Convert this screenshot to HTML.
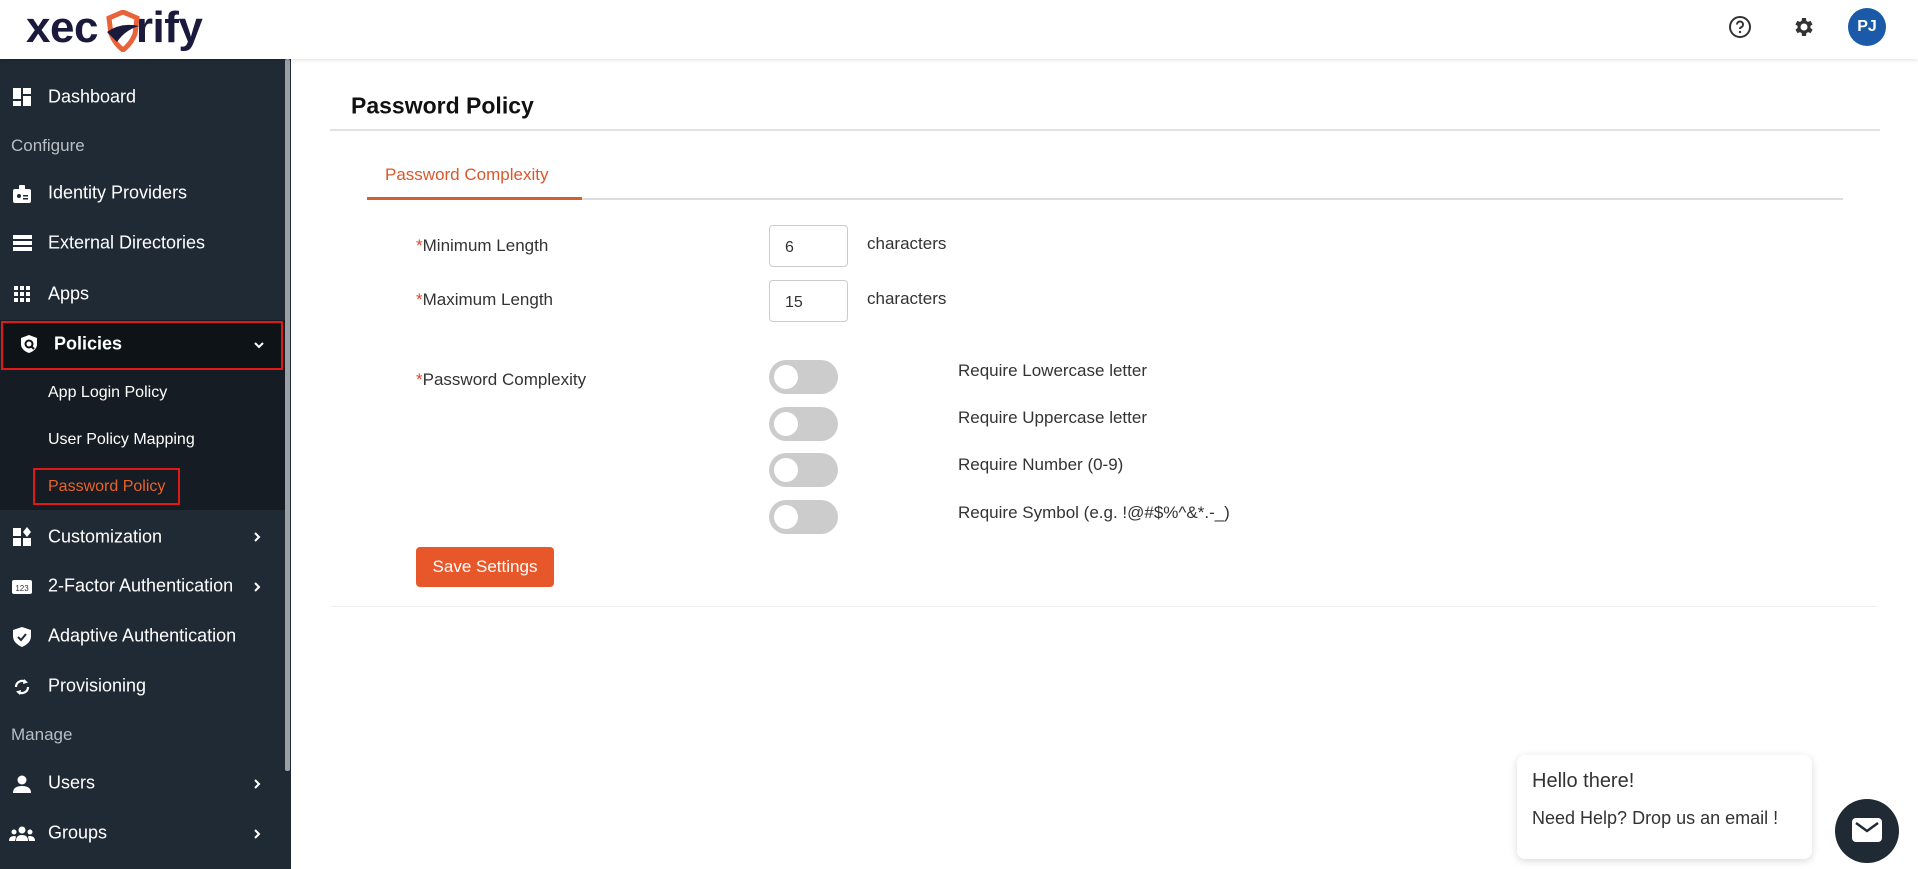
<!DOCTYPE html>
<html><head><meta charset="utf-8"><style>
*{box-sizing:border-box;margin:0;padding:0}
body{width:1918px;height:869px;overflow:hidden;background:#fff;font-family:"Liberation Sans",sans-serif;position:relative}
.hdr{position:absolute;left:0;top:0;width:1918px;height:59px;background:#fff;box-shadow:0 1px 4px rgba(0,0,0,.12);z-index:2}
.logo{position:absolute;left:26px;top:3px;font-size:44px;font-weight:bold;color:#1b1a3d;letter-spacing:-0.5px;white-space:nowrap}
.side{position:absolute;left:0;top:59px;width:291px;height:810px;background:#1f2a35;color:#fff}
.sb{position:absolute;left:285px;top:59px;width:5px;height:712px;background:#9aa0a6;border-radius:2px}
.it{position:absolute;left:48px;font-size:18px;transform:translateY(-50%);white-space:nowrap}
.ic{position:absolute;left:12px;width:20px;height:20px;transform:translateY(-50%)}
.sec{position:absolute;left:11px;font-size:17px;color:#b8bec4;transform:translateY(-50%)}
.chev{position:absolute;left:252px;transform:translateY(-50%);width:10px;height:10px}
.lbl{position:absolute;font-size:17px;color:#333;transform:translateY(-50%);white-space:nowrap}
.lbl b{color:#e0452a;font-weight:normal}
.inp{position:absolute;left:769px;width:79px;height:42px;border:1px solid #ccc;border-radius:4px;font-size:16px;color:#333;padding:13px 0 0 15px}
.tg{position:absolute;left:769px;width:69px;height:34px;border-radius:17px;background:#ccc;transform:translateY(-50%)}
.tg::after{content:"";position:absolute;left:5px;top:5px;width:24px;height:24px;border-radius:50%;background:#fff}
</style></head><body>
<div class="hdr">
 <div class="logo">xec<span style="display:inline-block;width:38px"></span>rify</div>
 <svg style="position:absolute;left:104px;top:10px" width="38" height="42" viewBox="0 0 36 42"><path d="M4 8 L18 2 L32 8 L30 24 Q26 34 18 40 Q10 34 6 24 Z" fill="none" stroke="#e8623a" stroke-width="5"/><path d="M2 22 Q16 12 34 16 Q20 20 12 32 Z" fill="#1b1a3d"/></svg>
 <svg style="position:absolute;left:1728px;top:15px" width="24" height="24" viewBox="0 0 24 24"><circle cx="12" cy="12" r="10" fill="none" stroke="#333" stroke-width="2"/><path d="M9 9.5a3 3 0 1 1 4 2.8c-.8.4-1 1-1 1.7" fill="none" stroke="#333" stroke-width="2"/><circle cx="12" cy="17" r="1.2" fill="#333"/></svg>
 <svg style="position:absolute;left:1791px;top:15px" width="24" height="24" viewBox="0 0 24 24"><path fill="#333" d="M19.4 13a7.5 7.5 0 0 0 0-2l2.1-1.6-2-3.5-2.5 1a7 7 0 0 0-1.7-1L15 3h-4l-.4 2.9a7 7 0 0 0-1.7 1l-2.5-1-2 3.5L6.6 11a7.5 7.5 0 0 0 0 2l-2.1 1.6 2 3.5 2.5-1a7 7 0 0 0 1.7 1L11 21h4l.4-2.9a7 7 0 0 0 1.7-1l2.5 1 2-3.5zM13 15.5A3.5 3.5 0 1 1 13 8.5a3.5 3.5 0 0 1 0 7z"/></svg>
 <div style="position:absolute;left:1848px;top:8px;width:38px;height:38px;border-radius:50%;background:#1a5aa8;color:#fff;font-weight:bold;font-size:16px;text-align:center;line-height:38px">PJ</div>
</div>
<div class="side">
 <div style="position:absolute;left:0;top:261px;width:285px;height:190px;background:#151c23"></div>
 <div style="position:absolute;left:1px;top:262px;width:282px;height:49px;border:2px solid #e01818;background:#0e1317"></div>
 <div style="position:absolute;left:33px;top:409px;width:147px;height:37px;border:2px solid #e01818"></div>
</div>
<div class="sb"></div>
<div style="position:absolute;left:0;top:0;color:#fff">
 <svg class="ic" style="top:97px" viewBox="0 0 20 20" fill="#fff"><rect x="1" y="1" width="8" height="11"/><rect x="11" y="1" width="8" height="6"/><rect x="11" y="9" width="8" height="10"/><rect x="1" y="14" width="8" height="5"/></svg>
 <div class="it" style="top:97px">Dashboard</div>
 <div class="sec" style="top:146px">Configure</div>
 <svg class="ic" style="top:194px" viewBox="0 0 20 20" fill="#fff"><rect x="1" y="5" width="18" height="14" rx="2"/><rect x="7" y="1" width="6" height="6" rx="1"/><circle cx="7" cy="12" r="2" fill="#1f2a35"/><rect x="11" y="11" width="5" height="1.5" fill="#1f2a35"/><rect x="11" y="14" width="5" height="1.5" fill="#1f2a35"/></svg>
 <div class="it" style="top:193px">Identity Providers</div>
 <svg class="ic" style="top:243px" viewBox="0 0 20 20" fill="#fff"><rect x="1" y="2" width="19" height="4"/><rect x="1" y="8" width="19" height="4"/><rect x="1" y="14" width="19" height="4"/></svg>
 <div class="it" style="top:243px">External Directories</div>
 <svg class="ic" style="top:294px" viewBox="0 0 20 20" fill="#fff"><rect x="2" y="2" width="4" height="4"/><rect x="8" y="2" width="4" height="4"/><rect x="14" y="2" width="4" height="4"/><rect x="2" y="8" width="4" height="4"/><rect x="8" y="8" width="4" height="4"/><rect x="14" y="8" width="4" height="4"/><rect x="2" y="14" width="4" height="4"/><rect x="8" y="14" width="4" height="4"/><rect x="14" y="14" width="4" height="4"/></svg>
 <div class="it" style="top:294px">Apps</div>
 <svg class="ic" style="top:344px;left:19px" viewBox="0 0 20 20"><path d="M10 1 L18 4 V10 Q18 16 10 19 Q2 16 2 10 V4 Z" fill="#fff"/><circle cx="10" cy="10" r="3.5" fill="none" stroke="#0e1317" stroke-width="2"/><path d="M12 12 L15 15" stroke="#0e1317" stroke-width="2"/></svg>
 <div class="it" style="top:344px;left:54px;font-weight:bold">Policies</div>
 <svg class="chev" style="top:345px;left:254px" viewBox="0 0 10 10"><path d="M1 3 L5 7 L9 3" fill="none" stroke="#fff" stroke-width="2"/></svg>
 <div class="it" style="top:393px;font-size:16px">App Login Policy</div>
 <div class="it" style="top:440px;font-size:16px">User Policy Mapping</div>
 <div class="it" style="top:487px;font-size:16px;color:#e8622c">Password Policy</div>
 <svg class="ic" style="top:537px" viewBox="0 0 20 20" fill="#fff"><rect x="1" y="1" width="8" height="8"/><rect x="1" y="11" width="8" height="8"/><rect x="11" y="11" width="8" height="8"/><path d="M15 0 L19 5 L15 10 L11 5Z"/></svg>
 <div class="it" style="top:537px">Customization</div>
 <svg class="chev" style="top:537px" viewBox="0 0 10 10"><path d="M3 1 L7 5 L3 9" fill="none" stroke="#fff" stroke-width="2"/></svg>
 <svg class="ic" style="top:587px" viewBox="0 0 20 20"><rect x="0" y="3" width="20" height="14" rx="2" fill="#fff"/><text x="10" y="14" font-size="8" text-anchor="middle" fill="#333" font-family="Liberation Sans">123</text></svg>
 <div class="it" style="top:586px">2-Factor Authentication</div>
 <svg class="chev" style="top:587px" viewBox="0 0 10 10"><path d="M3 1 L7 5 L3 9" fill="none" stroke="#fff" stroke-width="2"/></svg>
 <svg class="ic" style="top:637px" viewBox="0 0 20 20"><path d="M10 0 L19 3 V9 Q19 16 10 20 Q1 16 1 9 V3 Z" fill="#fff"/><path d="M6 10 L9 13 L14 7" fill="none" stroke="#1f2a35" stroke-width="2"/></svg>
 <div class="it" style="top:636px">Adaptive Authentication</div>
 <svg class="ic" style="top:687px" viewBox="0 0 20 20"><path d="M4 10a6 6 0 0 1 10-4.5M16 10a6 6 0 0 1-10 4.5" fill="none" stroke="#fff" stroke-width="2.2"/><path d="M12 2 L16 5.5 L11 7Z M8 18 L4 14.5 L9 13Z" fill="#fff"/></svg>
 <div class="it" style="top:686px">Provisioning</div>
 <div class="sec" style="top:735px">Manage</div>
 <svg class="ic" style="top:784px" viewBox="0 0 20 20" fill="#fff"><circle cx="10" cy="6" r="4.5"/><path d="M1 19 Q1 12 10 12 Q19 12 19 19Z"/></svg>
 <div class="it" style="top:783px">Users</div>
 <svg class="chev" style="top:784px" viewBox="0 0 10 10"><path d="M3 1 L7 5 L3 9" fill="none" stroke="#fff" stroke-width="2"/></svg>
 <svg class="ic" style="top:834px;width:26px;left:9px" viewBox="0 0 26 20" fill="#fff"><circle cx="13" cy="6" r="3.5"/><circle cx="5" cy="8" r="2.5"/><circle cx="21" cy="8" r="2.5"/><path d="M7 17 Q7 11 13 11 Q19 11 19 17Z M0 17 Q0 12 5 12 Q7 12 7 13 L6 17Z M26 17 Q26 12 21 12 Q19 12 19 13 L20 17Z"/></svg>
 <div class="it" style="top:833px">Groups</div>
 <svg class="chev" style="top:834px" viewBox="0 0 10 10"><path d="M3 1 L7 5 L3 9" fill="none" stroke="#fff" stroke-width="2"/></svg>
</div>

<div style="position:absolute;left:351px;top:106px;transform:translateY(-50%);font-size:23px;font-weight:bold;color:#111">Password Policy</div>
<div style="position:absolute;left:330px;top:129px;width:1550px;height:2px;background:#e2e2e2"></div>
<div style="position:absolute;left:385px;top:175px;transform:translateY(-50%);font-size:17px;color:#d9582c">Password Complexity</div>
<div style="position:absolute;left:367px;top:198px;width:1476px;height:2px;background:#ddd"></div>
<div style="position:absolute;left:367px;top:197px;width:215px;height:3px;background:#d0602e"></div>
<div class="lbl" style="left:416px;top:246px"><b>*</b>Minimum Length</div>
<div class="lbl" style="left:416px;top:300px"><b>*</b>Maximum Length</div>
<div class="lbl" style="left:416px;top:380px"><b>*</b>Password Complexity</div>
<div class="inp" style="top:225px">6</div>
<div class="inp" style="top:280px">15</div>
<div class="lbl" style="left:867px;top:244px">characters</div>
<div class="lbl" style="left:867px;top:299px">characters</div>
<div class="tg" style="top:377px"></div>
<div class="tg" style="top:424px"></div>
<div class="tg" style="top:470px"></div>
<div class="tg" style="top:517px"></div>
<div class="lbl" style="left:958px;top:371px">Require Lowercase letter</div>
<div class="lbl" style="left:958px;top:418px">Require Uppercase letter</div>
<div class="lbl" style="left:958px;top:465px">Require Number (0-9)</div>
<div class="lbl" style="left:958px;top:513px">Require Symbol (e.g. !@#$%^&amp;*.-_)</div>
<div style="position:absolute;left:416px;top:547px;width:138px;height:40px;background:#e8572a;border-radius:4px;color:#fff;font-size:17px;text-align:center;line-height:40px">Save Settings</div>
<div style="position:absolute;left:330px;top:606px;width:1548px;height:1px;background:#eee"></div>

<div style="position:absolute;left:1517px;top:755px;width:295px;height:104px;background:#fff;border-radius:8px;box-shadow:0 2px 8px rgba(0,0,0,.15)">
 <div style="position:absolute;left:15px;top:15px;font-size:20px;color:#333">Hello there!</div>
 <div style="position:absolute;left:15px;top:53px;font-size:18px;color:#333">Need Help? Drop us an email !</div>
</div>
<div style="position:absolute;left:1835px;top:799px;width:64px;height:64px;border-radius:50%;background:#1f2a35"></div>
<svg style="position:absolute;left:1852px;top:818px" width="30" height="24" viewBox="0 0 30 24"><rect x="0" y="0" width="30" height="24" rx="4" fill="#fff"/><path d="M4 5 L15 13 L26 5" fill="none" stroke="#1f2a35" stroke-width="2.5"/></svg>
</body></html>
